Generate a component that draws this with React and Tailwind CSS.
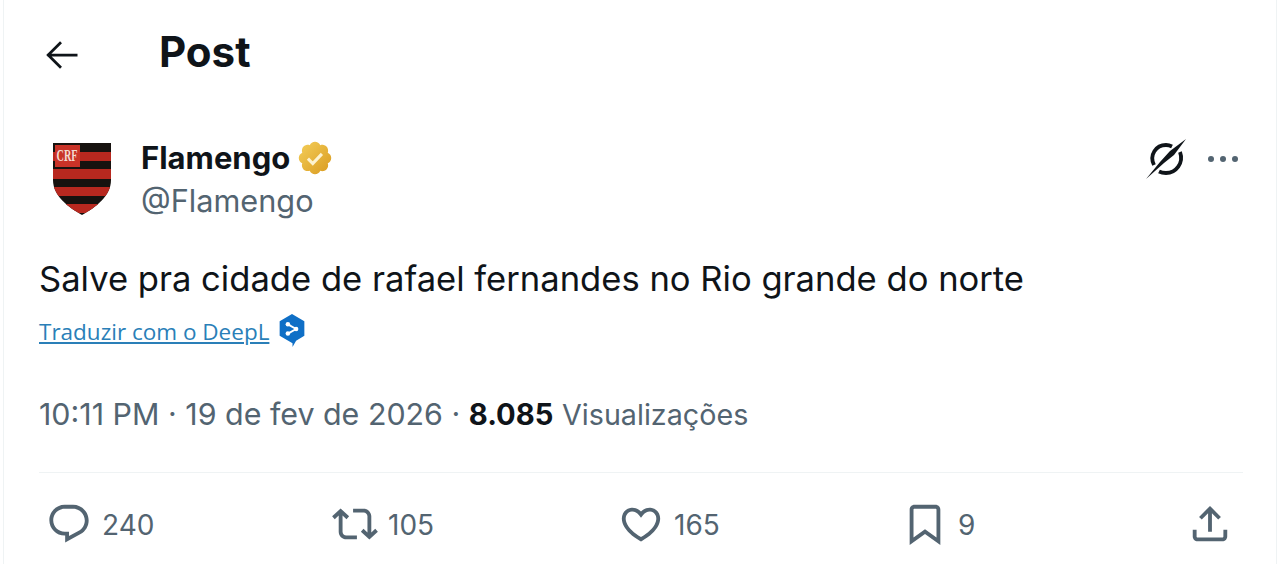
function Icon({ d, className }) {
  return (
    <svg viewBox="0 0 24 24" fill="currentColor" className={className}>
      <path d={d} />
    </svg>
  )
}

const icons = {
  reply: "M1.751 10c0-4.42 3.584-8 8.005-8h4.366c4.49 0 8.129 3.64 8.129 8.13 0 2.96-1.607 5.68-4.196 7.11l-8.054 4.46v-3.69h-.067c-4.49.1-8.183-3.51-8.183-8.01zm8.005-6c-3.317 0-6.005 2.69-6.005 6 0 3.37 2.77 6.08 6.138 6.01l.351-.01h1.761v2.3l5.087-2.81c1.951-1.08 3.163-3.13 3.163-5.36 0-3.39-2.744-6.13-6.129-6.13H9.756z",
  retweet: "M4.5 3.88l4.432 4.14-1.364 1.46L5.5 7.55V16c0 1.1.896 2 2 2H13v2H7.5c-2.209 0-4-1.79-4-4V7.55L1.432 9.48.068 8.02 4.5 3.88zM16.5 6H11V4h5.5c2.209 0 4 1.79 4 4v8.45l2.068-1.93 1.364 1.46-4.432 4.14-4.432-4.14 1.364-1.46 2.068 1.93V8c0-1.1-.896-2-2-2z",
  heart: "M16.697 5.5c-1.222-.06-2.679.51-3.89 2.16l-.805 1.09-.806-1.09C9.984 6.01 8.526 5.44 7.304 5.5c-1.243.07-2.349.78-2.91 1.91-.552 1.12-.633 2.78.479 4.82 1.074 1.97 3.257 4.27 7.129 6.61 3.87-2.34 6.052-4.64 7.126-6.61 1.111-2.04 1.03-3.7.477-4.82-.561-1.13-1.666-1.84-2.908-1.91zm4.187 7.69c-1.351 2.48-4.001 5.12-8.379 7.67l-.503.3-.504-.3c-4.379-2.55-7.029-5.19-8.382-7.67-1.36-2.5-1.41-4.86-.514-6.67.887-1.79 2.647-2.91 4.601-3.01 1.651-.09 3.368.56 4.798 2.01 1.429-1.45 3.146-2.1 4.796-2.01 1.954.1 3.714 1.22 4.601 3.01.896 1.81.846 4.17-.514 6.67z",
  bookmark: "M4 4.5C4 3.12 5.119 2 6.5 2h11C18.881 2 20 3.12 20 4.5v18.44l-8-5.71-8 5.71V4.5zM6.5 4c-.276 0-.5.22-.5.5v14.56l6-4.29 6 4.29V4.5c0-.28-.224-.5-.5-.5h-11z",
  share: "M12 2.59l5.7 5.7-1.41 1.42L13 6.41V16h-2V6.41l-3.3 3.3-1.41-1.42L12 2.59zM21 15l-.02 3.51c0 1.38-1.12 2.49-2.5 2.49H5.5C4.11 21 3 19.88 3 18.5V15h2v3.5c0 .28.22.5.5.5h12.98c.28 0 .5-.22.5-.5L19 15h2z",
}

const badgeShape = "M20.396 11c-.018-.646-.215-1.275-.57-1.816-.354-.54-.852-.972-1.438-1.246.223-.607.27-1.264.14-1.897-.131-.634-.437-1.218-.882-1.687-.47-.445-1.053-.75-1.687-.882-.633-.13-1.29-.083-1.897.14-.273-.587-.704-1.086-1.245-1.44S11.647 1.62 11 1.604c-.646.017-1.273.213-1.813.568s-.969.854-1.24 1.44c-.608-.223-1.267-.272-1.902-.14-.635.13-1.22.436-1.69.882-.445.47-.749 1.055-.878 1.688-.13.633-.08 1.29.144 1.896-.587.274-1.087.705-1.443 1.245-.356.54-.555 1.17-.574 1.817.02.647.218 1.276.574 1.817.356.54.856.972 1.443 1.245-.224.606-.274 1.263-.144 1.896.13.634.433 1.218.877 1.688.47.443 1.054.747 1.687.878.633.132 1.29.084 1.897-.136.274.586.705 1.084 1.246 1.439.54.354 1.17.551 1.816.569.647-.016 1.276-.213 1.817-.567s.972-.854 1.245-1.44c.604.239 1.266.296 1.903.164.636-.132 1.22-.447 1.68-.907.46-.46.776-1.044.908-1.681s.075-1.299-.165-1.903c.586-.274 1.084-.705 1.439-1.246.354-.54.551-1.17.569-1.816z"

function BackArrow() {
  return (
    <svg viewBox="0 0 24 24" fill="none" stroke="#0f1419" strokeWidth="1.500" className="w-[44px] h-[44px] mt-[4px]">
      <path d="M21 12H4.500M12 5L5 12L12 19" />
    </svg>
  )
}

function GoldBadge() {
  return (
    <svg viewBox="0 0 22 22" className="w-[38px] h-[38px]">
      <defs>
        <linearGradient id="gold" x1="0" y1="0" x2="1" y2="1">
          <stop offset="0" stopColor="#f4cf5a" />
          <stop offset="1" stopColor="#d99a1f" />
        </linearGradient>
      </defs>
      <path d={badgeShape} fill="url(#gold)" />
      <path d="M6.900 11.400L9.700 14.200L15 8.600" fill="none" stroke="#fdf3d0" strokeWidth="1.800" />
    </svg>
  )
}

function Shield() {
  return (
    <svg viewBox="0 0 60 74" className="w-[60px] h-[74px] ml-[1px]">
      <defs>
        <clipPath id="crest">
          <path d="M1 1H59V38C59 54 44 65 30 73C16 65 1 54 1 38Z" />
        </clipPath>
      </defs>
      <g clipPath="url(#crest)">
        <rect width="60" height="74" fill="#17120f" />
        <rect y="10" width="60" height="9" fill="#b8281f" />
        <rect y="27" width="60" height="10" fill="#b8281f" />
        <rect y="45" width="60" height="9" fill="#b8281f" />
        <rect y="62" width="60" height="9" fill="#b8281f" />
        <rect x="3" y="3" width="25" height="22" fill="#c93328" />
      </g>
      <text x="15" y="19" textAnchor="middle" fontSize="16" fontWeight="700" fontFamily="'Liberation Serif', serif" fill="#f3d9d2" textLength="21" lengthAdjust="spacingAndGlyphs">CRF</text>
    </svg>
  )
}

function SlashedCircle() {
  return (
    <svg viewBox="0 0 44 44" className="w-[44px] h-[44px]">
      <path d="M10 28C5 18 12 8 22 8C24 8 26 8.500 28 9.500" fill="none" stroke="#0f1419" strokeWidth="3.800" />
      <path d="M36 15C40 26 32 36 22 36C19 36 17 35.500 15 34.500" fill="none" stroke="#0f1419" strokeWidth="3.800" />
      <path d="M2 42L20 26L30 18L42 2L26 14L16 25Z" fill="#0f1419" />
    </svg>
  )
}

function DeepL() {
  return (
    <svg viewBox="0 0 28 34" className="w-[30px] h-[35px] -mt-[4px]">
      <path d="M14 1L26 8V22L18 27L14.500 33V29.500L2 22V8Z" fill="#0f6fc6" />
      <path d="M10 11L18 15.500L10 20" fill="none" stroke="#ffffff" strokeWidth="1.800" />
      <circle cx="10" cy="11" r="2.200" fill="#ffffff" />
      <circle cx="18" cy="15.500" r="2.200" fill="#ffffff" />
      <circle cx="10" cy="20" r="2.200" fill="#ffffff" />
    </svg>
  )
}

function Stat({ icon, count, width }) {
  return (
    <div className={`flex items-center gap-[10px] ${width}`}>
      <Icon d={icons[icon]} className="w-[46px] h-[46px] text-[#536471]" />
      <span className="text-[28px] leading-none pt-[1px] text-[#536471]">{count}</span>
    </div>
  )
}

function App() {
  return (
    <div className="h-[564px] overflow-hidden bg-white mx-[3px] border-x border-[#eff3f4] font-['Inter',sans-serif] text-[#0f1419]">
      {/* header */}
      <div className="flex items-center h-[106px] pl-[35px]">
        <BackArrow />
        <h1 className="ml-[76px] -mt-[2px] text-[42px] leading-none font-bold">Post</h1>
      </div>

      {/* author row */}
      <div className="flex items-start h-[122px] pl-[47px] pr-[38px] pt-[36px]">
        <Shield />
        <div className="ml-[29px] -mt-[3px]">
          <div className="flex items-center gap-[6px]">
            <span className="text-[31px] leading-[36px] font-bold">Flamengo</span>
            <GoldBadge />
          </div>
          <div className="text-[30.7px] leading-[36px] text-[#536471] mt-[6px]">@Flamengo</div>
        </div>
        <div className="ml-auto flex items-center gap-[20px] -mt-[5px]">
          <SlashedCircle />
          <div className="flex gap-[6px]">
            <span className="w-[6px] h-[6px] rounded-full bg-[#536471]"></span>
            <span className="w-[6px] h-[6px] rounded-full bg-[#536471]"></span>
            <span className="w-[6px] h-[6px] rounded-full bg-[#536471]"></span>
          </div>
        </div>
      </div>

      {/* post text */}
      <div className="pl-[35px]">
        <p className="text-[34.6px] leading-[44px] mt-[28px]">Salve pra cidade de rafael fernandes no Rio grande do norte</p>
        <div className="flex items-center gap-[8px] mt-[14px] h-[36px]">
          <a className="font-['Open_Sans',sans-serif] text-[22.5px] leading-none text-[#2a7fb8] underline">Traduzir com o DeepL</a>
          <DeepL />
        </div>
        <div className="mt-[44px] text-[30.4px] leading-[40px] text-[#536471]">
          10:11 PM · 19 de fev de 2026 · <span className="text-[29.2px] font-bold text-[#0f1419]">8.085</span> <span className="text-[28.7px]">Visualizações</span>
        </div>
      </div>

      {/* actions */}
      <div className="ml-[35px] mr-[33px] mt-[37px] border-t border-[#eff3f4]"></div>
      <div className="flex items-center pl-[42px] mt-[28px]">
        <Stat icon="reply" count="240" width="w-[286px]" />
        <Stat icon="retweet" count="105" width="w-[286px]" />
        <Stat icon="heart" count="165" width="w-[284px]" />
        <Stat icon="bookmark" count="9" width="w-[285px]" />
        <Icon d={icons.share} className="w-[46px] h-[46px] text-[#536471]" />
      </div>
    </div>
  )
}

export default App
